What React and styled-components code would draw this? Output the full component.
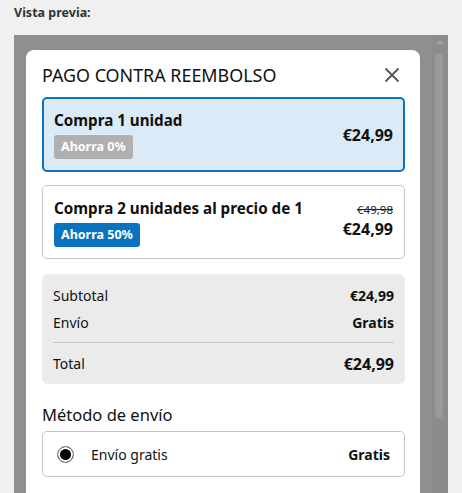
import React from "react";
import styled, { createGlobalStyle } from "styled-components";

const Global = createGlobalStyle`
  html, body { margin: 0; padding: 0; background: #f0f0f0; height: 100%; overflow: hidden; }
  body { font-family: "Noto Sans", "Open Sans", sans-serif; color: #111; }
  * { box-sizing: border-box; }
`;

const Page = styled.div`
  padding: 5px 14px 0 14px;
  height: 493px;
  display: flex;
  flex-direction: column;
`;

const Label = styled.div`
  font-size: 12.5px;
  font-weight: 700;
  color: #333;
  height: 30px;
  line-height: 16px;
`;

const Preview = styled.div`
  flex: 1;
  background: #8f8f8f;
  position: relative;
  padding: 15px 28px 0 12px;
  overflow: hidden;
`;

const Scrollbar = styled.div`
  position: absolute;
  top: 0;
  right: 0;
  bottom: 0;
  width: 16px;
  background: #8c8c8c;
`;

const ScrollArrow = styled.div`
  position: absolute;
  top: 5px;
  left: 4px;
  width: 0;
  height: 0;
  border-left: 4px solid transparent;
  border-right: 4px solid transparent;
  border-bottom: 4px solid #a3a3a3;
`;

const ScrollThumb = styled.div`
  position: absolute;
  top: 18px;
  left: 3px;
  width: 8px;
  height: 365px;
  border-radius: 4px;
  background: #999999;
`;

const Modal = styled.div`
  background: #fff;
  border-radius: 8px 8px 0 0;
  padding: 14px 15px 20px 16px;
  width: 394px;
`;

const Header = styled.div`
  display: flex;
  align-items: center;
  justify-content: space-between;
  height: 22px;
  margin-bottom: 11px;
`;

const Title = styled.h2`
  margin: 0;
  font-size: 17.9px;
  font-weight: 400;
  letter-spacing: 0;
`;

const Close = styled.button`
  border: 0;
  background: none;
  padding: 0;
  width: 16px;
  height: 16px;
  margin-right: 5px;
  display: flex;
`;

const Option = styled.div`
  display: flex;
  align-items: center;
  justify-content: space-between;
  border: ${p => (p.$selected ? "2px solid #0b72c0" : "1px solid #c6c6c6")};
  background: ${p => (p.$selected ? "#daeaf6" : "#fff")};
  border-radius: 5px;
  padding: ${p => (p.$selected ? "11px 10px" : "11px 11px")};
  margin-bottom: 13px;
  min-height: ${p => (p.$selected ? "75px" : "74px")};
`;

const OptionLeft = styled.div`
  display: flex;
  flex-direction: column;
  align-items: flex-start;
  gap: 5px;
`;

const OptionName = styled.div`
  font-size: 15.2px;
  font-weight: 700;
  line-height: 20px;
`;

const Badge = styled.span`
  display: inline-block;
  background: ${p => p.$color};
  color: #fff;
  font-size: 12.5px;
  font-weight: 700;
  padding: 3px 7px;
  border-radius: 3px;
  line-height: 18px;
`;

const Prices = styled.div`
  display: flex;
  flex-direction: column;
  align-items: flex-end;
`;

const OldPrice = styled.span`
  font-size: 11.5px;
  text-decoration: line-through;
  color: #222;
  line-height: 14px;
`;

const Price = styled.span`
  font-size: 16px;
  font-weight: 700;
  line-height: 24px;
`;

const Summary = styled.div`
  background: #ebebeb;
  border-radius: 6px;
  padding: 8px 11px 7px 11px;
  margin-top: 15px;
`;

const Row = styled.div`
  display: flex;
  justify-content: space-between;
  align-items: center;
  font-size: 14px;
  height: 27px;
`;

const Value = styled.span`
  font-weight: 700;
  font-size: ${p => (p.$big ? "16px" : "14px")};
`;

const Divider = styled.div`
  height: 1px;
  background: #c8c8c8;
  margin: 6px 0 7px 0;
`;

const SectionTitle = styled.div`
  font-size: 16.5px;
  margin: 20px 0 5px 0;
  line-height: 22px;
`;

const ShipOption = styled.div`
  display: flex;
  align-items: center;
  border: 1px solid #c6c6c6;
  border-radius: 5px;
  height: 46px;
  padding: 0 14px 0 14px;
`;

const Radio = styled.span`
  width: 17px;
  height: 17px;
  border-radius: 50%;
  border: 1px solid #8a8a8a;
  background: #000;
  box-shadow: inset 0 0 0 2px #fff;
  margin-right: 17px;
`;

const ShipName = styled.span`
  flex: 1;
  font-size: 14px;
`;

const ShipPrice = styled.span`
  font-size: 14px;
  font-weight: 700;
`;

export default function App() {
  return (
    <>
      <Global />
      <Page>
        <Label>Vista previa:</Label>
        <Preview>
          <Modal>
            <Header>
              <Title>PAGO CONTRA REEMBOLSO</Title>
              <Close aria-label="Cerrar">
                <svg width="16" height="16" viewBox="0 0 16 16">
                  <path d="M1.5 1.5 L14.5 14.5 M14.5 1.5 L1.5 14.5" stroke="#555" strokeWidth="1.8" fill="none" />
                </svg>
              </Close>
            </Header>
            <Option $selected>
              <OptionLeft>
                <OptionName>Compra 1 unidad</OptionName>
                <Badge $color="#b0b0b0">Ahorra 0%</Badge>
              </OptionLeft>
              <Prices>
                <Price>€24,99</Price>
              </Prices>
            </Option>
            <Option>
              <OptionLeft>
                <OptionName>Compra 2 unidades al precio de 1</OptionName>
                <Badge $color="#0b72c0">Ahorra 50%</Badge>
              </OptionLeft>
              <Prices>
                <OldPrice>€49,98</OldPrice>
                <Price>€24,99</Price>
              </Prices>
            </Option>
            <Summary>
              <Row>
                <span>Subtotal</span>
                <Value>€24,99</Value>
              </Row>
              <Row>
                <span>Envío</span>
                <Value>Gratis</Value>
              </Row>
              <Divider />
              <Row>
                <span>Total</span>
                <Value $big>€24,99</Value>
              </Row>
            </Summary>
            <SectionTitle>Método de envío</SectionTitle>
            <ShipOption>
              <Radio />
              <ShipName>Envío gratis</ShipName>
              <ShipPrice>Gratis</ShipPrice>
            </ShipOption>
          </Modal>
          <Scrollbar>
            <ScrollArrow />
            <ScrollThumb />
          </Scrollbar>
        </Preview>
      </Page>
    </>
  );
}
